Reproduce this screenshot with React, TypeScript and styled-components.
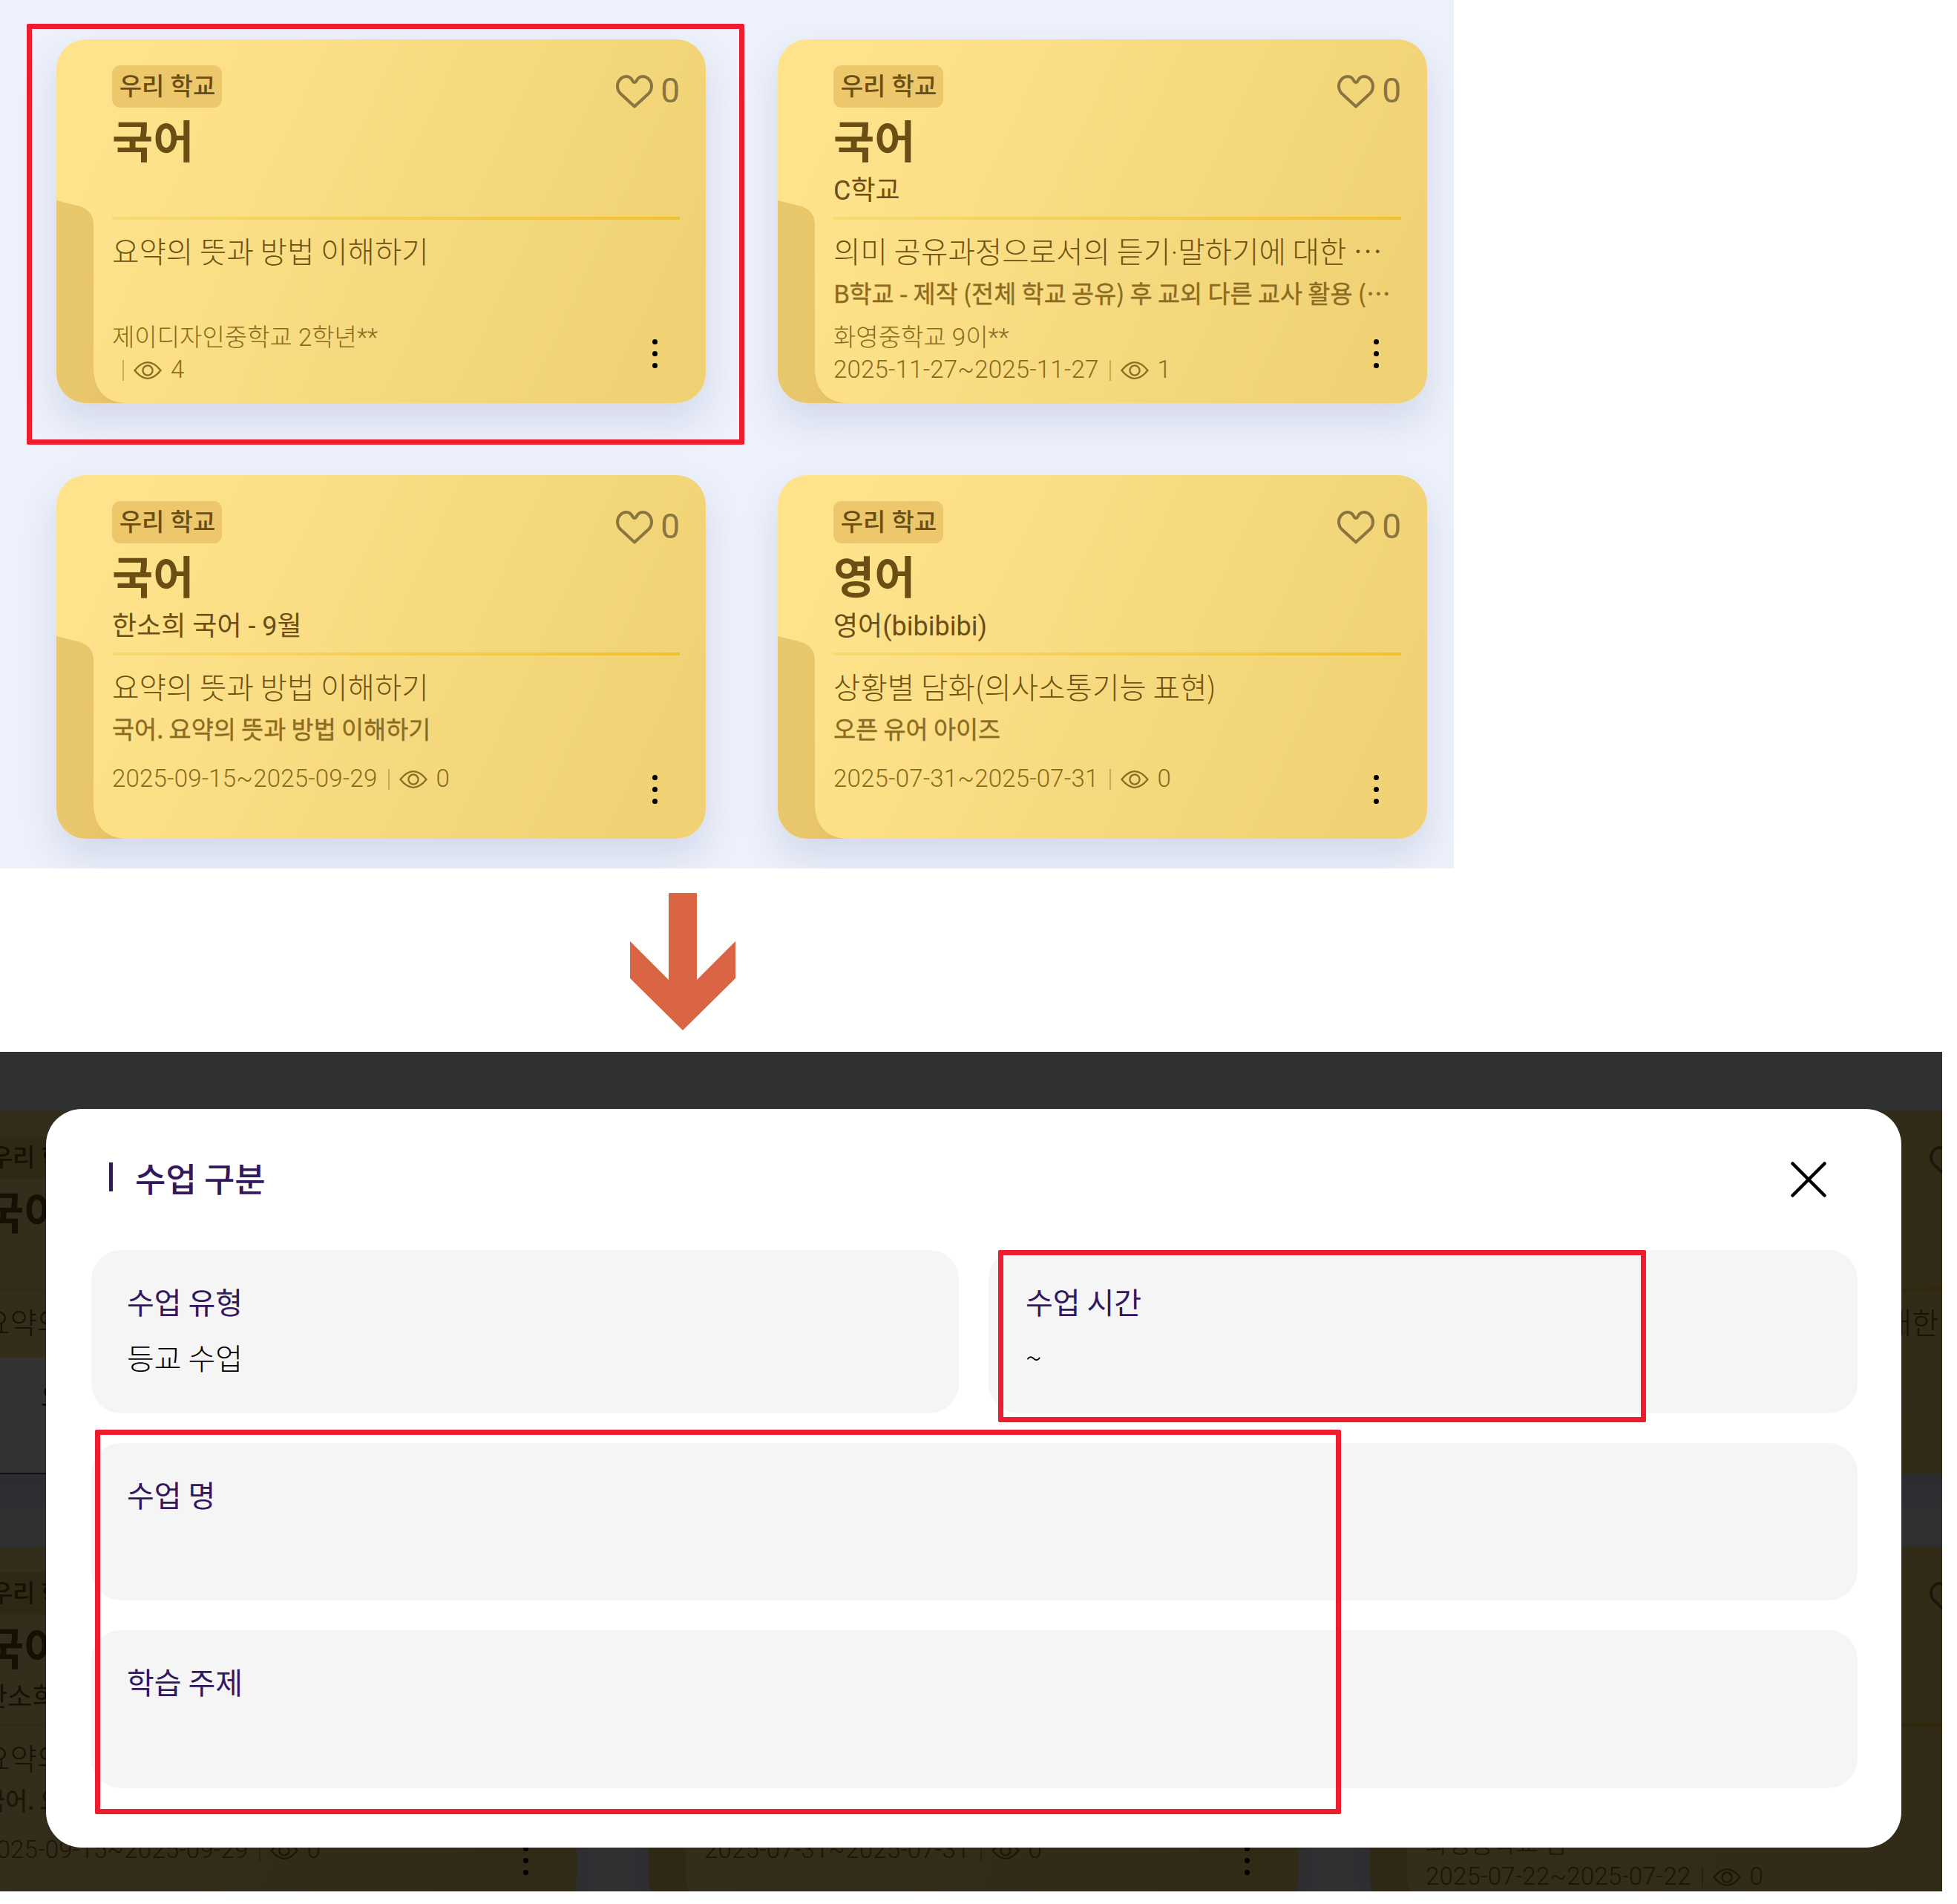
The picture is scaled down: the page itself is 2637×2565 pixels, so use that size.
import React from "react";
import styled, { createGlobalStyle } from "styled-components";

const CJK = `"Noto Sans CJK KR", "Noto Sans", sans-serif`;

const Global = createGlobalStyle`
  html, body { margin: 0; padding: 0; background: #fff; }
  * { box-sizing: border-box; }
  body { font-family: "Noto Sans CJK KR", "Noto Sans", sans-serif; }
`;

const Page = styled.div`
  position: relative;
  width: 2637px;
  height: 2565px;
  background: #fff;
  overflow: hidden;
`;

const Panel = styled.section`
  width: 1959px;
  height: 1170px;
  padding: 53px 36px 0 76px;
  background: #edf1fc;
  display: grid;
  grid-template-columns: 875px 875px;
  grid-auto-rows: 490px;
  gap: 97px;
  overflow: hidden;
`;

const ArrowRow = styled.div`
  height: 247px;
  padding: 33px 0 0 849px;
  svg { display: block; }
`;

const Shot = styled.section`
  position: relative;
  width: 2617px;
  height: 1131px;
  overflow: hidden;
  background: #edf1fc;
`;

const Backdrop = styled.div`
  margin-left: -98px;
  padding-top: 79px;
  display: grid;
  grid-template-columns: repeat(3, 875px);
  grid-auto-rows: 490px;
  gap: 97px;
`;

const Scrim = styled.div`
  position: absolute;
  inset: 0;
  background: rgba(0, 0, 0, 0.8);
`;

const CardBox = styled.article`
  position: relative;
  width: 875px;
  height: 490px;
  min-width: 0;
  padding: 35px 35px 0 75px;
  border-radius: 40px;
  background: linear-gradient(115deg, #ffe38c 12%, #f0d274 92%);
  box-shadow: 0 24px 48px rgba(80, 90, 130, 0.16);
  color: #6b4e14;
  font-family: Roboto, ${CJK};
`;

const Fold = styled.svg`
  position: absolute;
  left: 0;
  top: 0;
  width: 100px;
  height: 490px;
  border-bottom-left-radius: 40px;
`;

const CardBody = styled.div`
  position: relative;
  display: flex;
  flex-direction: column;
`;

const CardTop = styled.div`
  display: flex;
  justify-content: space-between;
  align-items: flex-start;
  height: 57px;
`;

const Tag = styled.span`
  height: 57px;
  width: 148px;
  padding: 0 0 5px 1px;
  border-radius: 11px;
  background: #ecc76b;
  display: flex;
  align-items: center;
  justify-content: center;
  font-size: 33px;
  font-weight: 500;
  white-space: nowrap;
`;

const Like = styled.div`
  display: flex;
  align-items: center;
  gap: 10px;
  margin-top: 13px;
  height: 45px;
  color: #8a7440;
  font-size: 46px;
  line-height: 45px;
`;

const LikeCount = styled.span`
  margin-top: -2px;
`;

const Title = styled.h3`
  margin: 13px 0 0;
  height: 70px;
  font-size: 60px;
  line-height: 70px;
  font-weight: 700;
  color: #6b4e14;
`;

const Sub = styled.div`
  margin-top: 6px;
  height: 46px;
  font-size: 36px;
  line-height: 46px;
  font-weight: 400;
  color: #6b4e14;
`;

const Divider = styled.div`
  margin-top: 12px;
  height: 4px;
  background: linear-gradient(90deg, #f8da72, #efc22f);
`;

const Line = styled.div`
  margin-top: 13px;
  height: 56px;
  font-family: ${CJK};
  font-size: 39.6px;
  line-height: 56px;
  font-weight: 300;
  color: #6f5210;
  white-space: nowrap;
  overflow: hidden;
  text-overflow: ellipsis;
`;

const MiddleDot = styled.span`
  font-family: Roboto, sans-serif;
`;

const Detail = styled.div`
  margin-top: 5px;
  height: 48px;
  font-family: ${CJK};
  font-size: 32.7px;
  line-height: 48px;
  font-weight: 400;
  color: #8c6b22;
  -webkit-text-stroke: 0.4px #8c6b22;
  white-space: nowrap;
  overflow: hidden;
  text-overflow: ellipsis;
`;

const Footer = styled.div`
  margin-top: 19px;
  display: flex;
  justify-content: space-between;
  align-items: flex-start;
`;

const Meta = styled.div`
  display: flex;
  flex-direction: column;
  font-size: 33px;
  font-weight: 300;
  color: #8a6a1c;
`;

const Name = styled.div`
  height: 35px;
  line-height: 35px;
  margin-bottom: 1px;
`;

const DateRow = styled.div`
  height: 48px;
  display: flex;
  align-items: center;
  letter-spacing: 0.2px;
`;

const Sep = styled.i`
  width: 2px;
  height: 28px;
  margin: 3px 13px 0 14px;
  background: #c9a95a;
`;

const EyeSvg = styled.svg`
  margin-top: 3px;
`;

const Count = styled.span`
  margin-left: 12px;
`;

const Dots = styled.div`
  display: flex;
  flex-direction: column;
  gap: 9px;
  margin: 20px 30px 0 0;
`;

const Dot = styled.i`
  width: 7px;
  height: 7px;
  border-radius: 50%;
  background: #000;
`;

const Menu = styled.div`
  position: absolute;
  left: 0;
  right: 0;
  bottom: 0;
  height: 157px;
  padding: 24px 0 0 153px;
  background: #fff;
  border-bottom: 2px solid #555;
  color: #222;
  font-size: 36px;
  border-radius: 0 0 40px 40px;
`;

const Modal = styled.div`
  position: absolute;
  left: 62px;
  top: 77px;
  width: 2500px;
  height: 995px;
  padding: 0 59px 0 61px;
  background: #fff;
  border-radius: 48px;
`;

const ModalHead = styled.header`
  height: 190px;
  padding: 0 42px 0 24px;
  display: flex;
  justify-content: space-between;
  align-items: center;
`;

const ModalTitle = styled.h2`
  margin: -4px 0 0;
  display: flex;
  align-items: center;
  gap: 30px;
  font-size: 45px;
  line-height: 60px;
  font-weight: 500;
  color: #33175f;
`;

const TitleBar = styled.i`
  width: 5px;
  height: 39px;
  margin-top: -4px;
  background: #33175f;
`;

const Fields = styled.div`
  display: grid;
  grid-template-columns: 1169px 1171px;
  grid-template-rows: 220px 212px 213px;
  column-gap: 40px;
  row-gap: 40px;
`;

const Field = styled.div<{ $wide?: boolean; $inset?: number }>`
  grid-column: ${(p) => (p.$wide ? "1 / -1" : "auto")};
  padding: 40px 48px 0 ${(p) => p.$inset ?? 48}px;
  border-radius: 40px;
  background: #f5f5f5;
  display: flex;
  flex-direction: column;
  gap: 17px;
`;

const FieldLabel = styled.div`
  font-size: 40px;
  line-height: 58px;
  font-weight: 400;
  color: #33175f;
`;

const FieldValue = styled.div`
  font-size: 40px;
  line-height: 58px;
  font-weight: 300;
  color: #000;
`;

const Mark = styled.div<{ $x: number; $y: number; $w: number; $h: number }>`
  position: absolute;
  left: ${(p) => p.$x}px;
  top: ${(p) => p.$y}px;
  width: ${(p) => p.$w}px;
  height: ${(p) => p.$h}px;
  border: 7px solid #ed1c2e;
  border-radius: 2px;
  pointer-events: none;
`;

const HeartIcon = () => (
  <svg width="50" height="45" viewBox="0 0 50 45" fill="none" stroke="currentColor" strokeWidth="4" strokeLinejoin="round">
    <path d="M25 42.5 L6 25 C3.5 22.5 2 19 2 15 C2 8 7.5 2 14 2 C18 2 20.5 4 22.5 8 C23.5 10.5 26.5 10.5 27.5 8 C29.5 4 32 2 36 2 C42.5 2 48 8 48 15 C48 19 46.5 22.5 44 25 Z" />
  </svg>
);

const EyeIcon = () => (
  <EyeSvg width="38" height="24" viewBox="0 0 38 24" fill="none" stroke="#8c6d22" strokeWidth="2.3">
    <path d="M1.5 12 C8 4 14 1.2 19 1.2 C24 1.2 30 4 36.5 12 C30 20 24 22.8 19 22.8 C14 22.8 8 20 1.5 12 Z" />
    <circle cx="19" cy="12" r="6.6" />
  </EyeSvg>
);

type CardData = {
  title: string;
  sub?: string;
  line: string;
  detail?: string;
  name?: string;
  date?: string;
  views: number;
  menu?: boolean;
};

const Card = ({ title, sub, line, detail, name, date, views, menu }: CardData) => {
  const [head, tail] = line.split("·");
  return (
    <CardBox>
      <Fold viewBox="0 0 100 490">
        <defs>
          <linearGradient id="foldFill" x1="0" y1="0" x2="1" y2="0">
            <stop offset="0" stopColor="#e8c76e" />
            <stop offset="0.5" stopColor="#e9c669" />
            <stop offset="1" stopColor="#e3c066" />
          </linearGradient>
        </defs>
        <path d="M0 217 L32 225 Q50 231 50 250 L50 445 Q52 487 92 490 L40 490 Q0 490 0 450 Z" fill="url(#foldFill)" />
      </Fold>
      <CardBody>
        <CardTop>
          <Tag>우리 학교</Tag>
          <Like>
            <HeartIcon />
            <LikeCount>0</LikeCount>
          </Like>
        </CardTop>
        <Title>{title}</Title>
        <Sub>{sub}</Sub>
        <Divider />
        <Line>
          {head}
          {tail !== undefined && <MiddleDot>·</MiddleDot>}
          {tail}
        </Line>
        <Detail>{detail}</Detail>
        <Footer>
          <Meta>
            {name && <Name>{name}</Name>}
            <DateRow>
              {date}
              <Sep />
              <EyeIcon />
              <Count>{views}</Count>
            </DateRow>
          </Meta>
          <Dots>
            <Dot />
            <Dot />
            <Dot />
          </Dots>
        </Footer>
      </CardBody>
      {menu && <Menu>오</Menu>}
    </CardBox>
  );
};

const first: CardData = {
  title: "국어",
  line: "요약의 뜻과 방법 이해하기",
  name: "제이디자인중학교 2학년**",
  views: 4,
};
const second: CardData = {
  title: "국어",
  sub: "C학교",
  line: "의미 공유과정으로서의 듣기·말하기에 대한 이해와 실천 활동",
  detail: "B학교 - 제작 (전체 학교 공유) 후 교외 다른 교사 활용 (수정 가능)",
  name: "화영중학교 9이**",
  date: "2025-11-27~2025-11-27",
  views: 1,
};
const third: CardData = {
  title: "국어",
  sub: "한소희 국어 - 9월",
  line: "요약의 뜻과 방법 이해하기",
  detail: "국어. 요약의 뜻과 방법 이해하기",
  date: "2025-09-15~2025-09-29",
  views: 0,
};
const fourth: CardData = {
  title: "영어",
  sub: "영어(bibibibi)",
  line: "상황별 담화(의사소통기능 표현)",
  detail: "오픈 유어 아이즈",
  date: "2025-07-31~2025-07-31",
  views: 0,
};
const sixth: CardData = {
  title: "국어",
  line: "요약의 뜻과 방법 이해하기",
  name: "화영중학교 김**",
  date: "2025-07-22~2025-07-22",
  views: 0,
};
const hiddenDetail: CardData = { ...second, detail: "국어 수업" };

export default function App() {
  return (
    <Page>
      <Global />
      <Panel>
        <Card {...first} />
        <Card {...second} />
        <Card {...third} />
        <Card {...fourth} />
      </Panel>
      <Mark $x={36} $y={32} $w={967} $h={567} />
      <ArrowRow>
        <svg width="142" height="185" viewBox="0 0 142 185">
          <polygon points="52,0 90,0 90,117 142,65 142,115 71,185 0,115 0,65 52,117" fill="#d96544" />
        </svg>
      </ArrowRow>
      <Shot>
        <Backdrop>
          <Card {...first} menu />
          <Card {...second} />
          <Card {...hiddenDetail} />
          <Card {...third} />
          <Card {...fourth} />
          <Card {...sixth} />
        </Backdrop>
        <Scrim />
        <Modal>
          <ModalHead>
            <ModalTitle>
              <TitleBar />
              수업 구분
            </ModalTitle>
            <svg width="48" height="48" viewBox="0 0 48 48" fill="none" stroke="#000" strokeWidth="4.5" strokeLinecap="round">
              <path d="M2.5 2.5 L45.5 45.5 M45.5 2.5 L2.5 45.5" />
            </svg>
          </ModalHead>
          <Fields>
            <Field>
              <FieldLabel>수업 유형</FieldLabel>
              <FieldValue>등교 수업</FieldValue>
            </Field>
            <Field $inset={50}>
              <FieldLabel>수업 시간</FieldLabel>
              <FieldValue>~</FieldValue>
            </Field>
            <Field $wide>
              <FieldLabel>수업 명</FieldLabel>
            </Field>
            <Field $wide>
              <FieldLabel>학습 주제</FieldLabel>
            </Field>
          </Fields>
        </Modal>
      </Shot>
      <Mark $x={1345} $y={1684} $w={873} $h={232} />
      <Mark $x={128} $y={1926} $w={1679} $h={518} />
    </Page>
  );
}
